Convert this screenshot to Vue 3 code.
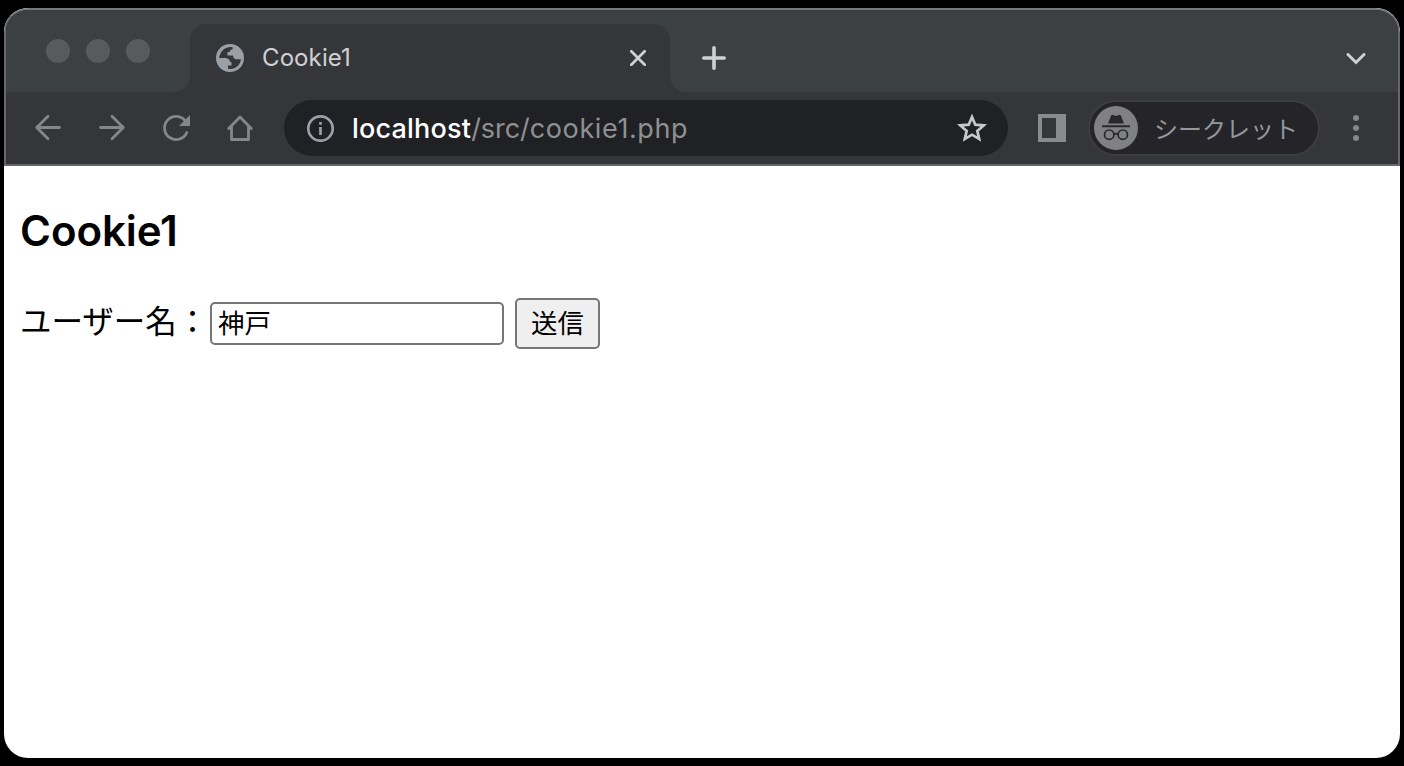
<script setup>
import { ref } from 'vue'
const userName = ref('神戸')
</script>

<template>
  <div class="desktop">
    <div class="window">
      <header class="chrome">
        <div class="tabstrip">
          <div class="lights"><i></i><i></i><i></i></div>
          <div class="tab">
            <svg class="globe" width="28" height="28" viewBox="0 0 28 28">
              <circle cx="14" cy="14" r="14" fill="#9aa0a6" />
              <path d="M16.600 3.200C10.400 2.200 4.500 6 3.100 14H9.500Q14 14.500 14 18H15.500V21.500H12V24.700C18.500 26 24.500 21.500 24.900 15.200H20.500Q17.500 15.500 17 11.500H11.500V8H14V6.500Q15 5.500 16.600 5.200Z" fill="#35363a" />
            </svg>
            <span class="tab-title">Cookie1</span>
            <svg class="close" width="16" height="16" viewBox="0 0 16 16"><path d="M1.300 1.300 14.700 14.700M14.700 1.300 1.300 14.700" /></svg>
          </div>
          <div class="strip-end">
            <svg class="plus" width="24" height="24" viewBox="0 0 24 24"><path d="M12 1.800V22.200M1.800 12H22.200" /></svg>
            <svg class="chevron" width="20" height="12" viewBox="0 0 20 12"><path d="M2 1.500 10 9.500 18 1.500" /></svg>
          </div>
        </div>
        <div class="toolbar">
          <svg class="nav" width="32" height="32" viewBox="0 0 32 32"><path d="M27.500 15.500H5M16 4.200 4.700 15.500 16 26.800" /></svg>
          <svg class="nav" width="32" height="32" viewBox="0 0 32 32"><path d="M4.500 15.500H27M16 4.200 27.300 15.500 16 26.800" /></svg>
          <svg class="nav" width="32" height="32" viewBox="0 0 32 32"><path d="M26.800 20.500A11.600 11.600 0 1 1 25 8.500" /><path class="solid" d="M30 3V14H19Z" /></svg>
          <svg class="nav" width="32" height="32" viewBox="0 0 32 32"><path d="M4.700 16.400 16 5 27.300 16.400M7.500 14V27.500H24.500V14" /></svg>
          <div class="omnibox">
            <svg class="info" width="28" height="28" viewBox="0 0 28 28"><circle cx="14.500" cy="14.500" r="12.200" /><path d="M14.500 13V21M14.500 8V10.800" /></svg>
            <span class="url"><b>localhost</b><span class="dir">/src/</span>cookie1.php</span>
            <svg class="star" width="32" height="32" viewBox="0 0 32 32"><path d="M16 5 19.300 12.700 27.700 13.400 21.300 18.900 23.200 27 16 22.700 8.800 27 10.700 18.900 4.300 13.400 12.700 12.700Z" /></svg>
          </div>
          <svg class="panel" width="28" height="28" viewBox="0 0 28 28"><path fill-rule="evenodd" d="M0 0H28V28H0ZM4 4V24H18V4Z" /></svg>
          <div class="incognito">
            <svg width="44" height="44" viewBox="0 0 44 44">
              <circle cx="22" cy="22" r="22" fill="#808184" />
              <path d="M14 17.500 17 9.800Q17.600 8.500 19 9L22 10 25 9Q26.400 8.500 27 9.800L30 17.500ZM8 19.300H36V21.200H8Z" fill="#29282d" />
              <g fill="none" stroke="#29282d" stroke-width="1.700"><circle cx="15.200" cy="28.700" r="4.700" /><circle cx="28.800" cy="28.700" r="4.700" /><path d="M19.900 28.500Q22 26.900 24.100 28.500" /></g>
            </svg>
            <span>シークレット</span>
          </div>
          <div class="menu"><i></i><i></i><i></i></div>
        </div>
      </header>
      <main>
        <h1>Cookie1</h1>
        <form @submit.prevent>
          <label for="user">ユーザー名：</label>
          <input id="user" v-model="userName" type="text" />
          <button type="submit">送信</button>
        </form>
      </main>
    </div>
  </div>
</template>

<style>
body { margin: 0; background: #000; }
</style>

<style scoped>
.desktop { box-sizing: border-box; width: 1404px; height: 766px; padding: 8px 4px; background: #000; overflow: hidden; }
.window { height: 750px; border-radius: 24px; overflow: hidden; background: #fff; }
svg { display: block; flex: none; }
.chrome { box-sizing: border-box; height: 158px; border: 2px solid #67676b; border-top-color: #76797b; border-radius: 24px 24px 0 0; background: #35363a; overflow: hidden; }
.tabstrip { height: 82px; display: flex; background: #35363a; }
.lights { box-sizing: border-box; width: 184px; height: 82px; padding: 29px 0 0 40px; display: flex; gap: 16px; background: #3c4043; border-bottom-right-radius: 16px; }
.lights i { width: 24px; height: 24px; border-radius: 50%; background: #575b5e; }
.tab { position: relative; box-sizing: border-box; width: 480px; height: 82px; padding: 14px 24px 0 26px; display: flex; align-items: flex-start; background: linear-gradient(#3c4043 0 40px, #35363a 40px); z-index: 0; }
.tab::before { content: ""; position: absolute; inset: 14px 0 0; background: #35363a; border-radius: 16px 16px 0 0; z-index: -1; }
.globe { margin-top: 20px; }
.tab-title { margin: 19px 0 0 18px; font: 24px/30px Inter, sans-serif; letter-spacing: 0.1px; color: #d0d1d3; }
.close { margin: 26px 0 0 auto; fill: none; stroke: #d0d1d3; stroke-width: 2.700; stroke-linecap: round; }
.strip-end { flex: 1; box-sizing: border-box; display: flex; justify-content: space-between; padding: 36px 32px 0; background: #3c4043; border-bottom-left-radius: 16px; }
.plus { fill: none; stroke: #d0d1d3; stroke-width: 3.600; stroke-linecap: round; }
.chevron { margin-top: 7px; fill: none; stroke: #d0d1d3; stroke-width: 3; stroke-linecap: round; }
.toolbar { height: 72px; display: flex; align-items: center; padding-left: 26px; }
.nav { margin-right: 32px; fill: none; stroke: #858689; stroke-width: 2.800; stroke-linecap: round; stroke-linejoin: round; }
.nav .solid { fill: #858689; stroke: none; }
.omnibox { box-sizing: border-box; width: 724px; height: 56px; margin-left: -4px; padding: 0 20px 0 22px; border-radius: 28px; background: #202124; display: flex; align-items: center; }
.info { fill: none; stroke: #9aa0a6; stroke-width: 2.700; }
.url { margin: 2px 0 0 18px; font: 27px/34px Inter, sans-serif; letter-spacing: 0.600px; color: #8f9092; white-space: nowrap; }
.url b { color: #fff; font-weight: 500; letter-spacing: 0.200px; }
.url .dir { letter-spacing: -0.050px; }
.star { margin-left: auto; fill: none; stroke: #c7c8c9; stroke-width: 2.700; }
.panel { margin-left: 30px; fill: #898a8d; }
.incognito { box-sizing: border-box; width: 232px; height: 56px; margin-left: 22px; padding-left: 4px; border: 2px solid #3e3d42; border-radius: 28px; background: #252429; display: flex; align-items: center; }
.incognito span { margin: -1px 0 0 16px; font: 24px/36px "Noto Sans CJK JP", sans-serif; color: #93999e; white-space: nowrap; }
.menu { margin-left: 33px; display: grid; gap: 4px; }
.menu i { width: 6px; height: 6px; border-radius: 50%; background: #858689; }
main { padding: 37px 16px 0; color: #000; }
h1 { margin: 0; height: 56px; font: 600 42px/56px Inter, sans-serif; letter-spacing: -0.050px; }
form { display: flex; align-items: center; height: 51px; margin-top: 39px; }
label { width: 190px; flex: none; margin-top: -10px; font: 31.500px/48px "Noto Sans CJK JP", sans-serif; white-space: nowrap; }
input { box-sizing: border-box; width: 294px; height: 43px; border: 2px solid #767676; border-radius: 5px; padding: 0 6px 5px; background: #fff; color: #000; font: 26.400px/34px "Noto Sans CJK JP", sans-serif; outline: none; }
button { box-sizing: border-box; width: 85px; height: 51px; margin: 0 0 0 11px; padding: 0 0 3px; border: 2px solid #767676; border-radius: 5px; background: #efefef; color: #000; font: 26.400px/38px "Noto Sans CJK JP", sans-serif; }
</style>
